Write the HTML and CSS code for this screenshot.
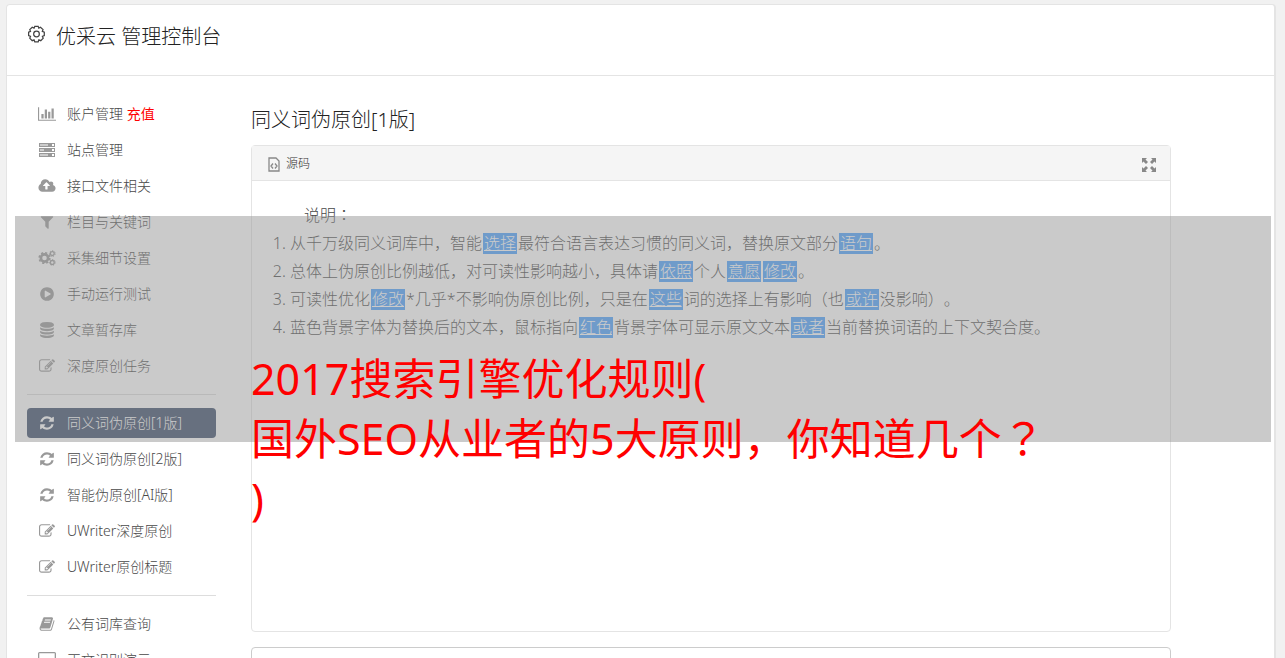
FILE: index.html
```
<!DOCTYPE html>
<html lang="zh-CN">
<head>
    <meta charset="UTF-8">
    <meta name="viewport" content="width=device-width, initial-scale=1.0">
    <title>优采云 管理控制台</title>
    <link rel="stylesheet" href="styles.css">
</head>
<body>
    <!-- shared icons -->
    <svg class="sprite" aria-hidden="true">
        <symbol id="refresh" viewBox="0 0 1536 1792"><path d="M1511 1056q0 5-1 7-64 268-268 434.500t-478 166.500q-146 0-282.500-55t-243.500-157l-129 129q-19 19-45 19t-45-19-19-45v-448q0-26 19-45t45-19h448q26 0 45 19t19 45-19 45l-137 137q71 66 161 102t187 36q134 0 250-65t186-179q11-17 53-117 8-23 30-23h192q13 0 22.500 9.500t9.500 22.500zm25-800v448q0 26-19 45t-45 19h-448q-26 0-45-19t-19-45 19-45l138-138q-148-137-349-137-134 0-250 65t-186 179q-11 17-53 117-8 23-30 23h-199q-13 0-22.500-9.500t-9.500-22.500v-7q65-268 270-434.500t480-166.500q146 0 284 55.500t245 156.500l130-129q19-19 45-19t45 19 19 45z"/></symbol>
        <symbol id="edit" viewBox="0 0 1792 1792"><path d="M888 1184l116-116-152-152-116 116v56h96v96h56zm440-720q-16-16-33 1l-350 350q-17 17-1 33t33-1l350-350q17-17 1-33zm80 594v190q0 119-84.500 203.500t-203.500 84.500h-832q-119 0-203.500-84.500t-84.500-203.500v-832q0-119 84.500-203.500t203.500-84.500h832q63 0 117 25 15 7 18 23 3 17-9 29l-49 49q-14 14-32 8-23-6-45-6h-832q-66 0-113 47t-47 113v832q0 66 47 113t113 47h832q66 0 113-47t47-113v-126q0-13 9-22l64-64q15-15 35-7t20 29zm-96-738l288 288-672 672h-288v-288zm444 132l-92 92-288-288 92-92q28-28 68-28t68 28l152 152q28 28 28 68t-28 68z"/></symbol>
    </svg>

    <div class="card">
        <header>
            <svg class="gear" viewBox="0 0 20 20"><path d="M8.200 1.500h3.600l.6 1.800 1.800-.9 2.700 2.500-.8 1.800 2.100.8v3.700l-2 .8.900 1.900-2.600 2.600-2-.8-.7 2H8.200l-.8-2-1.900.8-2.600-2.600.8-1.900-2-.8V7.500l2-.8-.8-1.800 2.600-2.500 1.900.9z"/><circle cx="10" cy="9.500" r="3"/></svg>
            <h1>优采云 管理控制台</h1>
        </header>
        <div class="container">
            <nav>
                <a href="#account"><svg viewBox="0 0 2048 1792"><path d="M640 896v512h-256v-512h256zm384-512v1024h-256v-1024h256zm1024 1152v128h-2048v-1536h128v1408h1920zm-640-896v768h-256v-768h256zm384-384v1152h-256v-1152h256z"/></svg><span>账户管理 <em>充值</em></span></a>
                <a href="#sites"><svg viewBox="0 0 18 16"><path fill-rule="evenodd" d="M1 1h16v4H1zM2 2.500v1h8v-1zM14 2v2h2V2zM1 6h16v4H1zM2 7.500v1h4v-1zM14 7v2h2V7zM1 11h16v4H1zM2 12.500v1h8v-1zM14 12v2h2v-2z"/></svg><span>站点管理</span></a>
                <a href="#api"><svg viewBox="0 0 1920 1792"><path d="M1280 864q0-14-9-23l-352-352q-9-9-23-9t-23 9l-351 351q-10 12-10 24 0 14 9 23t23 9h224v352q0 13 9.500 22.500t22.500 9.500h192q13 0 22.500-9.500t9.500-22.500v-352h224q13 0 22.500-9.500t9.500-22.500zm640 288q0 159-112.500 271.500t-271.500 112.500h-1088q-185 0-316.500-131.500t-131.500-316.500q0-130 70-240t188-165q-2-30-2-43 0-212 150-362t362-150q156 0 285.500 87t188.500 231q71-62 166-62 106 0 181 75t75 181q0 76-41 138 130 31 213.500 135.500t83.500 238.500z"/></svg><span>接口文件相关</span></a>
                <a href="#keywords"><svg viewBox="0 0 1792 1792"><path d="M1595 295q17 41-14 70l-493 493v742q0 42-39 59-13 5-25 5-27 0-45-19l-256-256q-19-19-19-45v-486l-493-493q-31-29-14-70 17-39 59-39h1280q42 0 59 39z"/></svg><span>栏目与关键词</span></a>
                <a href="#collect"><svg class="cogs" viewBox="0 0 18 16"><circle cx="6.500" cy="8" r="3.600" stroke-width="2.600"/><circle cx="6.500" cy="8" r="5.300" stroke-width="1.600" stroke-dasharray="2.200 1.960"/><circle cx="14.300" cy="3.600" r="1.900" stroke-width="1.300"/><circle cx="14.300" cy="3.600" r="2.900" stroke-width="1" stroke-dasharray="1.300 1.300"/><circle cx="14.300" cy="12.400" r="1.900" stroke-width="1.300"/><circle cx="14.300" cy="12.400" r="2.900" stroke-width="1" stroke-dasharray="1.300 1.300"/></svg><span>采集细节设置</span></a>
                <a href="#run"><svg viewBox="0 0 1792 1792"><path d="M896 128q209 0 385.500 103t279.500 279.500 103 385.500-103 385.500-279.500 279.500-385.500 103-385.500-103-279.500-279.500-103-385.500 103-385.500 279.500-279.500 385.500-103zm384 823q32-18 32-55t-32-55l-544-320q-31-19-64-1-32 19-32 56v640q0 37 32 56 16 8 32 8 17 0 32-9z"/></svg><span>手动运行测试</span></a>
                <a href="#articles"><svg viewBox="0 0 1792 1792"><path d="M896 768q237 0 443-43t325-127v170q0 69-103 128t-280 93.500-385 34.500-385-34.500-280-93.500-103-128v-170q119 84 325 127t443 43zm0 768q237 0 443-43t325-127v170q0 69-103 128t-280 93.500-385 34.500-385-34.500-280-93.500-103-128v-170q119 84 325 127t443 43zm0-384q237 0 443-43t325-127v170q0 69-103 128t-280 93.500-385 34.500-385-34.500-280-93.500-103-128v-170q119 84 325 127t443 43zm0-1152q208 0 385 34.500t280 93.500 103 128v128q0 69-103 128t-280 93.500-385 34.500-385-34.500-280-93.500-103-128v-128q0-69 103-128t280-93.500 385-34.500z"/></svg><span>文章暂存库</span></a>
                <a href="#tasks"><svg><use href="#edit"/></svg><span>深度原创任务</span></a>
                <hr>
                <a href="#v1" class="active"><svg><use href="#refresh"/></svg><span>同义词伪原创[1版]</span></a>
                <a href="#v2"><svg><use href="#refresh"/></svg><span>同义词伪原创[2版]</span></a>
                <a href="#ai"><svg><use href="#refresh"/></svg><span>智能伪原创[AI版]</span></a>
                <a href="#uwriter"><svg><use href="#edit"/></svg><span>UWriter深度原创</span></a>
                <a href="#uwriter-title"><svg><use href="#edit"/></svg><span>UWriter原创标题</span></a>
                <hr>
                <a href="#words"><svg viewBox="0 0 1792 1792"><path d="M1703 478q40 57 18 129l-275 906q-19 64-76.500 107.500t-122.500 43.500h-923q-77 0-148.500-53.500t-99.500-131.500q-24-67-2-127 0-4 3-27t4-37q1-8-3-21.500t-3-19.500q2-11 8-21t16.500-23.500 16.500-23.500q23-38 45-91.500t30-91.500q3-10 .5-30t-.5-28q3-11 17-28t17-23q21-36 42-92t25-90q1-9-2.500-32t.5-28q4-13 22-30.500t22-22.500q19-26 42.500-84.500t27.500-96.500q1-8-3-25.500t-2-26.500q2-8 9-18t18-23 17-21q8-12 16.500-30.500t15-35 16-36 19.500-32 26.500-23.500 36-11.500 47.500 5.500l-1 3q38-9 51-9h761q74 0 114 56t18 130l-274 906q-36 119-71.500 153.500t-128.500 34.500h-869q-27 0-38 15-11 16-1 43 24 70 144 70h923q29 0 56-15.500t35-41.500l300-987q7-22 5-57 38 15 59 43zm-1064 2q-4 13 2 22.500t20 9.500h608q13 0 25.500-9.500t16.500-22.500l21-64q4-13-2-22.500t-20-9.500h-608q-13 0-25.500 9.500t-16.500 22.500zm-83 256q-4 13 2 22.500t20 9.500h608q13 0 25.500-9.500t16.500-22.500l21-64q4-13-2-22.500t-20-9.500h-608q-13 0-25.500 9.500t-16.500 22.500z"/></svg><span>公有词库查询</span></a>
                <a href="#demo"><svg viewBox="0 0 18 16"><path fill-rule="evenodd" d="M1.500 0h15a1.500 1.500 0 0 1 1.500 1.500v10a1.500 1.500 0 0 1-1.500 1.500H12v2H6v-2H1.500A1.500 1.500 0 0 1 0 11.500v-10A1.500 1.500 0 0 1 1.500 0zM1.300 1.300v8.700h15.400V1.300z"/></svg><span>正文识别演示</span></a>
            </nav>
            <main>
                <h2>同义词伪原创[1版]</h2>
                <section class="editor">
                    <div class="toolbar">
                        <button type="button" class="source"><svg viewBox="0 0 12 15"><path d="M1 1h7l3 3v10H1zM5 6.500L3 9l2 2.500M7 6.500L9 9l-2 2.500"/></svg>源码</button>
                        <button type="button" class="expand" aria-label="全屏"><svg viewBox="0 0 14 14"><path d="M0 0h5L3.500 1.500 6 4 4 6 1.500 3.500 0 5zM14 0v5l-1.500-1.500L10 6 8 4l2.500-2.500L9 0zM0 14V9l1.500 1.500L4 8l2 2-2.500 2.500L5 14zM14 14H9l1.500-1.500L8 10l2-2 2.500 2.500L14 9z"/></svg></button>
                    </div>
                    <div class="content">
                        <p>说明<span class="centered" lang="ja">：</span></p>
                        <ol>
                            <li>从千万级同义词库中，智能<mark>选择</mark>最符合语言表达习惯的同义词，替换原文部分<mark>语句</mark>。</li>
                            <li>总体上伪原创比例越低，对可读性影响越小，具体请<mark>依照</mark>个人<mark>意愿</mark><mark>修改</mark>。</li>
                            <li>可读性优化<mark>修改</mark>*几乎*不影响伪原创比例，只是在<mark>这些</mark>词的选择上有影响（也<mark>或许</mark>没影响）。</li>
                            <li>蓝色背景字体为替换后的文本，鼠标指向<mark>红色</mark>背景字体可显示原文文本<mark>或者</mark>当前替换词语的上下文契合度。</li>
                        </ol>
                    </div>
                </section>
                <textarea class="result" aria-label="结果"></textarea>
            </main>
        </div>
    </div>

    <div class="banner">
        <p>2017搜索引擎优化规则(<br>国外SEO从业者的5大原则，你知道几个<span class="centered" lang="ja">？</span><br>)</p>
    </div>
</body>
</html>
```

FILE: styles.css
```
body {
    font-family: "Noto Sans", "Noto Sans CJK SC", sans-serif;
    font-size: 14px;
    margin: 0;
    padding: 4px 9px 0 6px;
    background-color: #f1f1f1;
    color: #484848;
    position: relative;
    text-spacing-trim: space-all;
}
svg {
    fill: currentColor;
    flex: none;
}
.sprite {
    position: absolute;
    width: 0;
    height: 0;
}
/* full-width marks set in the middle of their cell */
.centered {
    font-family: "Noto Sans CJK JP", sans-serif;
    line-height: 1;
}
.card {
    background-color: white;
    border: 1px solid #e4e4e4;
    border-right-width: 2px;
    border-radius: 4px;
}
header {
    display: flex;
    gap: 10px;
    height: 60px;
    padding: 10px 20px 0;
    border-bottom: 1px solid #e4e4e4;
    color: #222;
}
header h1 {
    margin: 0;
    font-size: 20px;
    line-height: 44px;
    font-weight: 300;
}
.gear {
    width: 19px;
    height: 19px;
    margin-top: 10px;
    fill: none;
    stroke: #444;
    stroke-width: 1.3;
}
.container {
    display: flex;
    gap: 35px;
    padding: 20px 103px 20px 20px;
}
nav {
    width: 189px;
    flex: none;
    padding-top: 3px;
}
nav a {
    display: flex;
    align-items: flex-start;
    gap: 11px;
    height: 30px;
    margin-bottom: 6px;
    padding-left: 11px;
    border-radius: 4px;
    color: #484848;
    line-height: 29px;
    text-decoration: none;
    font-weight: 300;
}
nav a svg {
    width: 18px;
    height: 16px;
    margin-top: 7px;
    color: #999;
}
nav em {
    color: red;
    font-style: normal;
    font-weight: 400;
}
nav hr {
    margin: 13px 0;
    border: 0;
    border-top: 1px solid #ddd;
}
nav a.active, nav a.active svg {
    background-color: #384a68;
    color: white;
}
.cogs {
    fill: none;
    stroke: #999;
}
main {
    flex: 1;
    min-width: 0;
}
main h2 {
    margin: 8px 0 10px;
    font-size: 20px;
    line-height: 31px;
    font-weight: 300;
    color: #222;
}
.editor {
    border: 1px solid #e4e4e4;
    border-radius: 4px;
}
.toolbar {
    display: flex;
    justify-content: space-between;
    align-items: center;
    height: 34px;
    padding: 0 13px 0 15px;
    background-color: #f5f5f5;
    border-bottom: 1px solid #e4e4e4;
}
.toolbar button {
    display: flex;
    align-items: center;
    gap: 6px;
    padding: 0 1px;
    border: 0;
    background: none;
    font-family: inherit;
    font-size: 12px;
    font-weight: 300;
    color: #333;
}
.toolbar svg {
    margin-top: 3px;
}
.source svg {
    width: 12px;
    height: 15px;
    fill: none;
    stroke: #888;
    stroke-width: 1.3;
}
.expand svg {
    width: 14px;
    height: 14px;
    fill: #888;
}
.content {
    min-height: 430px;
    padding: 20px 20px 0;
    font-size: 16px;
    line-height: 28px;
    font-weight: 300;
}
.content p {
    margin: 0;
    text-indent: 2em;
}
.content ol {
    margin: 0;
    padding-left: 18px;
}
.content mark {
    display: inline-block;
    margin: 0 1px;
    padding: 0 1px;
    line-height: 21px;
    background-color: #48a0fe;
    color: white;
    text-decoration: underline;
}
.result {
    display: block;
    box-sizing: border-box;
    width: 100%;
    height: 120px;
    margin-top: 15px;
    border: 1px solid #ccc;
    border-radius: 4px;
    resize: none;
}
/* grey strip with the headline over the page */
.banner {
    position: absolute;
    top: 216px;
    left: 15px;
    right: 14px;
    height: 226px;
    background-color: rgba(150, 150, 150, 0.5);
}
.banner p {
    margin: 0;
    padding: 133px 0 0 236px;
    font-size: 43px;
    line-height: 60px;
    color: red;
}
```
